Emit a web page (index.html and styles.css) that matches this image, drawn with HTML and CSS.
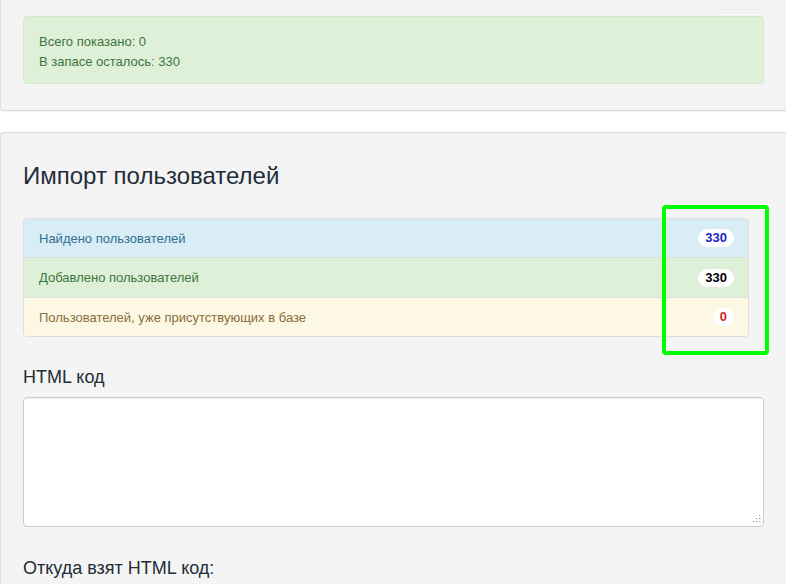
FILE: index.html
```html
<!DOCTYPE html>
<html lang="ru">
<head>
<meta charset="utf-8">
<title>Импорт пользователей</title>
<link rel="stylesheet" href="styles.css">
</head>
<body>
<div class="panel panel-top">
  <div class="top-tab"></div>
  <div class="alert">
    <div>Всего показано: 0</div>
    <div>В запасе осталось: 330</div>
  </div>
</div>
<div class="panel panel-main">
  <h3 class="title">Импорт пользователей</h3>
  <ul class="list">
    <li class="item item-info"><span>Найдено пользователей</span><span class="badge badge-blue">330</span></li>
    <li class="item item-success"><span>Добавлено пользователей</span><span class="badge badge-black">330</span></li>
    <li class="item item-warning"><span>Пользователей, уже присутствующих в базе</span><span class="badge badge-red">0</span></li>
  </ul>
  <label class="label">HTML код</label>
  <div class="code-wrap">
    <textarea class="code"></textarea>
    <svg class="grip" width="8" height="8" viewBox="0 0 8 8">
      <rect x="6" y="0" width="1" height="1" fill="#9a9a9a"/>
      <rect x="3" y="3" width="1" height="1" fill="#9a9a9a"/>
      <rect x="6" y="3" width="1" height="1" fill="#9a9a9a"/>
      <rect x="0" y="6" width="1" height="1" fill="#9a9a9a"/>
      <rect x="3" y="6" width="1" height="1" fill="#9a9a9a"/>
      <rect x="6" y="6" width="1" height="1" fill="#9a9a9a"/>
      <rect x="7" y="1" width="1" height="1" fill="#d8d8d8"/>
      <rect x="4" y="4" width="1" height="1" fill="#d8d8d8"/>
      <rect x="7" y="4" width="1" height="1" fill="#d8d8d8"/>
      <rect x="1" y="7" width="1" height="1" fill="#d8d8d8"/>
      <rect x="4" y="7" width="1" height="1" fill="#d8d8d8"/>
      <rect x="7" y="7" width="1" height="1" fill="#d8d8d8"/>
    </svg>
  </div>
  <label class="label label-second">Откуда взят HTML код:</label>
</div>
<div class="highlight"></div>
</body>
</html>
```
FILE: styles.css
```css
html, body {
  margin: 0;
  padding: 0;
  background: #ffffff;
  font-family: "Liberation Sans", Arial, sans-serif;
  overflow: hidden;
}
.panel {
  background: #f4f4f4;
  border: 1px solid #dcdcdc;
  border-right: none;
  border-radius: 4px 0 0 4px;
  box-shadow: 0 1px 2px rgba(0, 0, 0, 0.05);
}
.panel-top {
  border-top: none;
  border-radius: 0 0 0 4px;
  padding: 0 22px 26px 22px;
  margin-bottom: 21px;
}
.top-tab {
  width: 44px;
  height: 9px;
  margin-left: auto;
  margin-right: 2px;
  border-bottom: 1px solid #e6ece2;
}
.alert {
  margin-top: 6px;
  background: #dff0d8;
  border: 1px solid #d6e9c6;
  border-radius: 4px;
  color: #3c763d;
  font-size: 13px;
  line-height: 20px;
  padding: 15px 15px 11px 15px;
}
.panel-main {
  padding: 30px 22px 0 22px;
  min-height: 460px;
}
.title {
  margin: 0;
  font-size: 24px;
  font-weight: normal;
  line-height: 26px;
  color: #1f2d3a;
}
.list {
  list-style: none;
  margin: 29px 15px 0 0;
  padding: 0;
  border: 1px solid #dddddd;
  border-radius: 4px;
  overflow: hidden;
  font-size: 13px;
}
.item {
  display: flex;
  align-items: center;
  justify-content: space-between;
  height: 38px;
  padding: 0 14px 0 15px;
}
.item + .item {
  border-top: 1px solid #dddddd;
}
.item-info { background: #d9edf7; color: #31708f; }
.item-success { background: #dff0d8; color: #3c763d; height: 39px; }
.item-warning { background: #fcf8e3; color: #8a6d3b; }
.badge {
  background: #ffffff;
  border-radius: 10px;
  font-weight: bold;
  font-size: 13px;
  line-height: 18px;
  padding: 0 7px;
}
.badge-blue { color: #2323c8; }
.badge-black { color: #000000; }
.badge-red { color: #d21f1f; }
.label {
  display: block;
  font-size: 18px;
  line-height: 24px;
  color: #222d36;
  margin-top: 28px;
  margin-bottom: 8px;
}
.code-wrap {
  position: relative;
}
.code {
  display: block;
  box-sizing: border-box;
  width: 100%;
  height: 130px;
  margin: 0;
  background: #ffffff;
  border: 1px solid #cccccc;
  border-radius: 4px;
  box-shadow: inset 0 1px 1px rgba(0, 0, 0, 0.075);
  resize: none;
}
.grip {
  position: absolute;
  right: 3px;
  bottom: 4px;
}
.label-second {
  margin-top: 29px;
}
.highlight {
  position: absolute;
  left: 662px;
  top: 205px;
  width: 99px;
  height: 142px;
  border: 4px solid #00ff00;
  border-radius: 4px;
}
```
